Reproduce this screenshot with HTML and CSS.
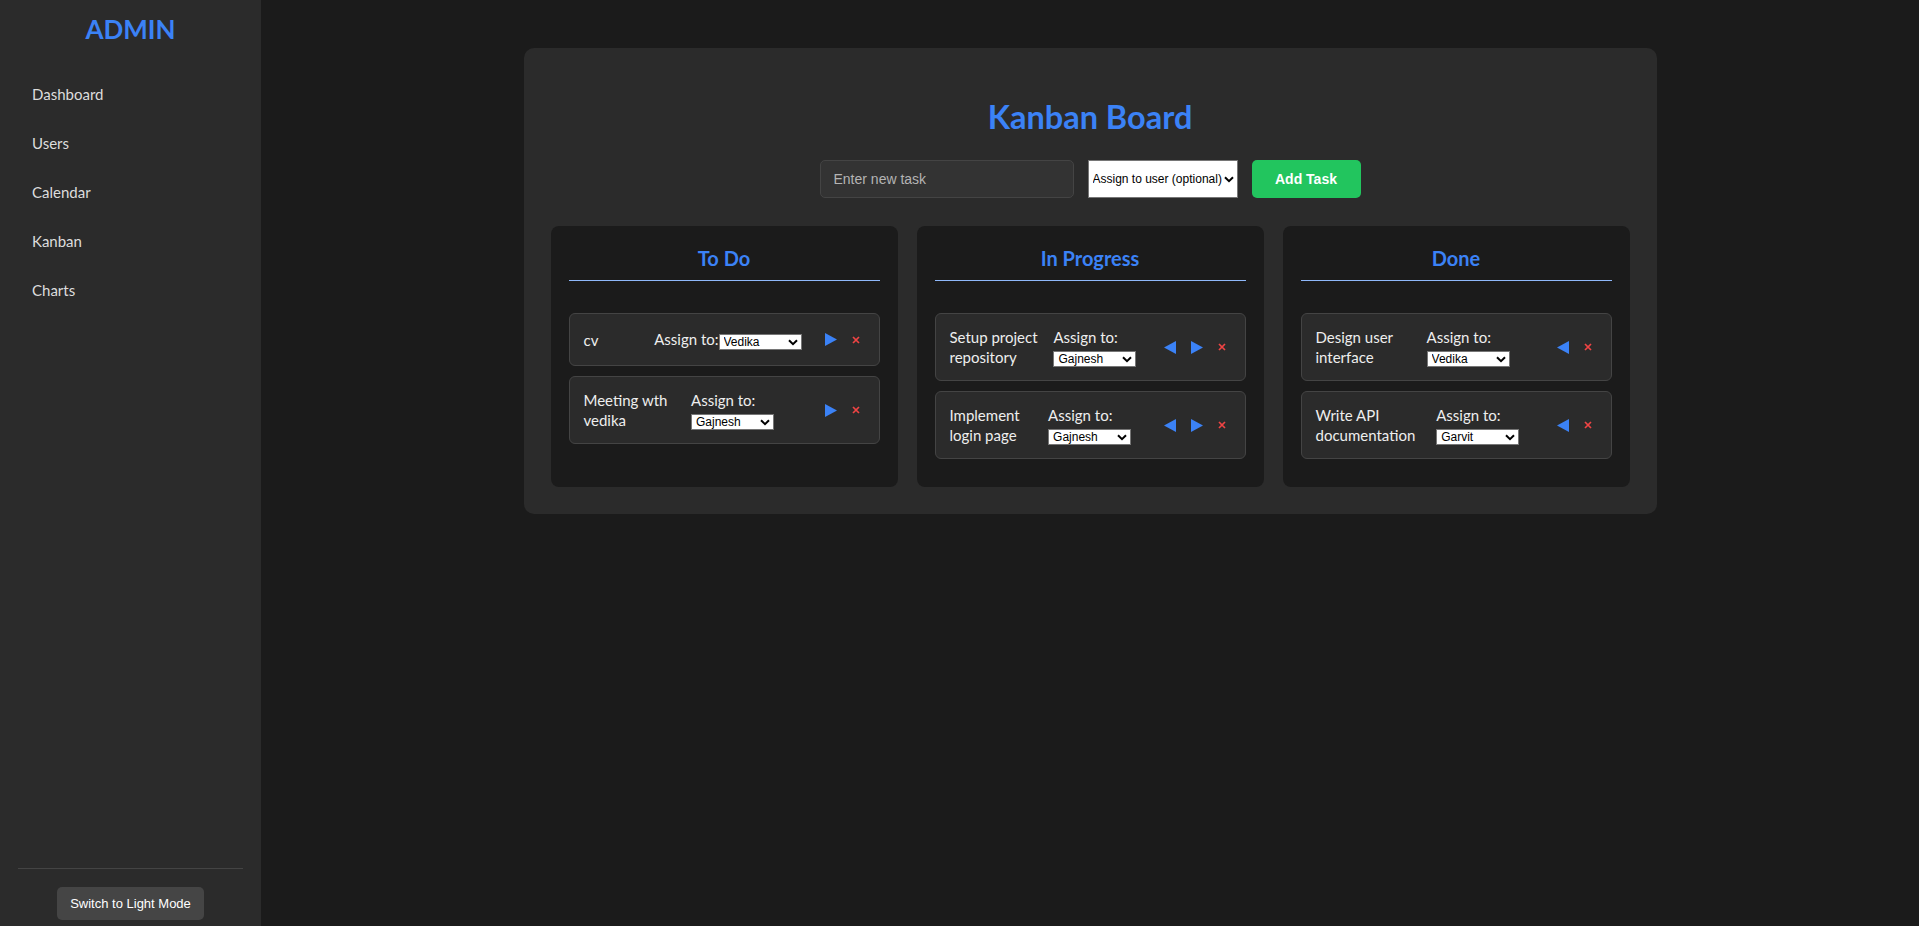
FILE: index.html
```html
<!DOCTYPE html>
<html lang="en">
<head>
<meta charset="utf-8">
<title>Admin - Kanban</title>
<link rel="stylesheet" href="styles.css">
</head>
<body>
<div class="app">
  <aside class="sidebar">
    <h1 class="brand">ADMIN</h1>
    <nav class="nav">
      <a class="nav-link" href="#">Dashboard</a>
      <a class="nav-link" href="#">Users</a>
      <a class="nav-link" href="#">Calendar</a>
      <a class="nav-link" href="#">Kanban</a>
      <a class="nav-link" href="#">Charts</a>
    </nav>
    <div class="sidebar-footer">
      <button class="theme-btn">Switch to Light Mode</button>
    </div>
  </aside>

  <main class="main">
    <section class="board">
      <h2 class="board-title">Kanban Board</h2>
      <div class="add-row">
        <input class="task-input" type="text" placeholder="Enter new task">
        <span class="select-wrap">
          <select class="user-select add-select">
            <option>Assign to user (optional)</option>
            <option>Vedika</option>
            <option>Gajnesh</option>
            <option>Garvit</option>
          </select>
          <svg class="chev chev-lg" width="10" height="7" viewBox="0 0 10 7"><path d="M1 1.2L5 5.2L9 1.2" fill="none" stroke="#000" stroke-width="2"/></svg>
        </span>
        <button class="add-btn">Add Task</button>
      </div>

      <div class="columns">
        <div class="column">
          <h3 class="column-title">To Do</h3>
          <div class="task">
            <span class="task-text">cv</span>
            <div class="assign"><label class="assign-label">Assign to:</label><span class="select-wrap"><select class="user-select small-select"><option>Vedika</option><option>Gajnesh</option><option>Garvit</option></select><svg class="chev" width="10" height="7" viewBox="0 0 10 7"><path d="M1 1.2L5 5.2L9 1.2" fill="none" stroke="#000" stroke-width="2"/></svg></span></div>
            <div class="actions">
              <button class="icon-btn"><svg width="12" height="13" viewBox="0 0 12 13"><path d="M0 0L12 6.5L0 13Z" fill="#3b82f6"/></svg></button>
              <button class="icon-btn del-btn"><svg width="8" height="8" viewBox="0 0 8 8"><path d="M1 1L7 7M7 1L1 7" stroke="#ef4444" stroke-width="1.7"/></svg></button>
            </div>
          </div>
          <div class="task">
            <span class="task-text">Meeting wth vedika</span>
            <div class="assign"><label class="assign-label">Assign to:</label><span class="select-wrap"><select class="user-select small-select"><option>Gajnesh</option><option>Vedika</option><option>Garvit</option></select><svg class="chev" width="10" height="7" viewBox="0 0 10 7"><path d="M1 1.2L5 5.2L9 1.2" fill="none" stroke="#000" stroke-width="2"/></svg></span></div>
            <div class="actions">
              <button class="icon-btn"><svg width="12" height="13" viewBox="0 0 12 13"><path d="M0 0L12 6.5L0 13Z" fill="#3b82f6"/></svg></button>
              <button class="icon-btn del-btn"><svg width="8" height="8" viewBox="0 0 8 8"><path d="M1 1L7 7M7 1L1 7" stroke="#ef4444" stroke-width="1.7"/></svg></button>
            </div>
          </div>
        </div>

        <div class="column">
          <h3 class="column-title">In Progress</h3>
          <div class="task">
            <span class="task-text">Setup project repository</span>
            <div class="assign"><label class="assign-label">Assign to:</label><span class="select-wrap"><select class="user-select small-select"><option>Gajnesh</option><option>Vedika</option><option>Garvit</option></select><svg class="chev" width="10" height="7" viewBox="0 0 10 7"><path d="M1 1.2L5 5.2L9 1.2" fill="none" stroke="#000" stroke-width="2"/></svg></span></div>
            <div class="actions">
              <button class="icon-btn"><svg width="12" height="13" viewBox="0 0 12 13"><path d="M12 0L0 6.5L12 13Z" fill="#3b82f6"/></svg></button>
              <button class="icon-btn"><svg width="12" height="13" viewBox="0 0 12 13"><path d="M0 0L12 6.5L0 13Z" fill="#3b82f6"/></svg></button>
              <button class="icon-btn del-btn"><svg width="8" height="8" viewBox="0 0 8 8"><path d="M1 1L7 7M7 1L1 7" stroke="#ef4444" stroke-width="1.7"/></svg></button>
            </div>
          </div>
          <div class="task">
            <span class="task-text">Implement login page</span>
            <div class="assign"><label class="assign-label">Assign to:</label><span class="select-wrap"><select class="user-select small-select"><option>Gajnesh</option><option>Vedika</option><option>Garvit</option></select><svg class="chev" width="10" height="7" viewBox="0 0 10 7"><path d="M1 1.2L5 5.2L9 1.2" fill="none" stroke="#000" stroke-width="2"/></svg></span></div>
            <div class="actions">
              <button class="icon-btn"><svg width="12" height="13" viewBox="0 0 12 13"><path d="M12 0L0 6.5L12 13Z" fill="#3b82f6"/></svg></button>
              <button class="icon-btn"><svg width="12" height="13" viewBox="0 0 12 13"><path d="M0 0L12 6.5L0 13Z" fill="#3b82f6"/></svg></button>
              <button class="icon-btn del-btn"><svg width="8" height="8" viewBox="0 0 8 8"><path d="M1 1L7 7M7 1L1 7" stroke="#ef4444" stroke-width="1.7"/></svg></button>
            </div>
          </div>
        </div>

        <div class="column">
          <h3 class="column-title">Done</h3>
          <div class="task">
            <span class="task-text">Design user interface</span>
            <div class="assign"><label class="assign-label">Assign to:</label><span class="select-wrap"><select class="user-select small-select"><option>Vedika</option><option>Gajnesh</option><option>Garvit</option></select><svg class="chev" width="10" height="7" viewBox="0 0 10 7"><path d="M1 1.2L5 5.2L9 1.2" fill="none" stroke="#000" stroke-width="2"/></svg></span></div>
            <div class="actions">
              <button class="icon-btn"><svg width="12" height="13" viewBox="0 0 12 13"><path d="M12 0L0 6.5L12 13Z" fill="#3b82f6"/></svg></button>
              <button class="icon-btn del-btn"><svg width="8" height="8" viewBox="0 0 8 8"><path d="M1 1L7 7M7 1L1 7" stroke="#ef4444" stroke-width="1.7"/></svg></button>
            </div>
          </div>
          <div class="task">
            <span class="task-text">Write API documentation</span>
            <div class="assign"><label class="assign-label">Assign to:</label><span class="select-wrap"><select class="user-select small-select"><option>Garvit</option><option>Vedika</option><option>Gajnesh</option></select><svg class="chev" width="10" height="7" viewBox="0 0 10 7"><path d="M1 1.2L5 5.2L9 1.2" fill="none" stroke="#000" stroke-width="2"/></svg></span></div>
            <div class="actions">
              <button class="icon-btn"><svg width="12" height="13" viewBox="0 0 12 13"><path d="M12 0L0 6.5L12 13Z" fill="#3b82f6"/></svg></button>
              <button class="icon-btn del-btn"><svg width="8" height="8" viewBox="0 0 8 8"><path d="M1 1L7 7M7 1L1 7" stroke="#ef4444" stroke-width="1.7"/></svg></button>
            </div>
          </div>
        </div>
      </div>
    </section>
  </main>
</div>
</body>
</html>
```

FILE: styles.css
```css
html, body {
  margin: 0;
  height: 100%;
}

body {
  background: #1b1b1b;
  color: #eeeeee;
  font-family: Lato, "Noto Sans", sans-serif;
}

.app {
  display: flex;
  height: 100vh;
}

/* Sidebar */
.sidebar {
  width: 261px;
  flex-shrink: 0;
  background: #2b2b2b;
  display: flex;
  flex-direction: column;
}

.brand {
  margin: 13px 0 0;
  font-size: 26px;
  line-height: 32px;
  font-weight: 700;
  color: #3b82f6;
  text-align: center;
}

.nav {
  margin-top: 24px;
  display: flex;
  flex-direction: column;
}

.nav-link {
  display: block;
  padding: 14.5px 32px;
  font-size: 15px;
  line-height: 20px;
  color: #dddddd;
  text-decoration: none;
}

.sidebar-footer {
  margin: auto 18px 0;
  border-top: 1px solid #444444;
  padding: 18px 0 6px;
  display: flex;
  justify-content: center;
}

.theme-btn {
  height: 33px;
  padding: 0 13px;
  background: #454545;
  color: #ffffff;
  border: none;
  border-radius: 5px;
  font: 13px "Liberation Sans", Arial, sans-serif;
}

/* Main */
.main {
  flex: 1;
  padding-top: 48px;
  overflow: auto;
}

.board {
  width: 1133px;
  margin: 0 auto;
  box-sizing: border-box;
  background: #2b2b2b;
  border-radius: 10px;
  padding: 27px;
}

.board-title {
  margin: 22px 0 23px;
  text-align: center;
  font-size: 32.5px;
  line-height: 40px;
  font-weight: 700;
  color: #3b82f6;
}

.add-row {
  display: flex;
  justify-content: center;
  align-items: center;
  gap: 14px;
}

.task-input {
  width: 254px;
  height: 38px;
  box-sizing: border-box;
  padding: 0 13px;
  background: #333333;
  border: 1px solid #444444;
  border-radius: 5px;
  color: #eeeeee;
  font: 14px "Liberation Sans", Arial, sans-serif;
  outline: none;
}

.task-input::placeholder {
  color: #b4b4b4;
}

.select-wrap {
  position: relative;
  display: inline-block;
  vertical-align: middle;
}

.user-select {
  -webkit-appearance: none;
  appearance: none;
  display: block;
  box-sizing: border-box;
  background: #ffffff;
  color: #000000;
  border: 1px solid #767676;
  border-radius: 0;
  font: 12px "Liberation Sans", Arial, sans-serif;
  outline: none;
  margin: 0;
}

.add-select {
  width: 150px;
  height: 38px;
  padding: 0 14px 0 4px;
}

.small-select {
  width: 83px;
  height: 16px;
  padding: 0 12px 0 4px;
  line-height: 14px;
}

.chev {
  position: absolute;
  right: 4px;
  top: 5px;
  pointer-events: none;
}

.chev-lg {
  right: 4px;
  top: 16px;
}

.add-btn {
  width: 109px;
  height: 38px;
  background: #22c55e;
  border: none;
  border-radius: 5px;
  color: #ffffff;
  font: bold 14px "Liberation Sans", Arial, sans-serif;
}

/* Columns */
.columns {
  margin-top: 28px;
  display: grid;
  grid-template-columns: repeat(3, 1fr);
  gap: 19px;
}

.column {
  background: #1b1b1b;
  border-radius: 8px;
  padding: 18px;
}

.column-title {
  margin: 2px 0 32px;
  padding-bottom: 10px;
  border-bottom: 1px solid #8fb8fa;
  text-align: center;
  font-size: 20px;
  line-height: 24px;
  font-weight: 700;
  color: #3b82f6;
}

.task {
  display: flex;
  align-items: center;
  gap: 10px;
  padding: 13px 14px;
  margin-bottom: 10px;
  background: #2b2b2b;
  border: 1px solid #444444;
  border-radius: 6px;
  font-size: 15px;
  line-height: 20px;
  color: #eeeeee;
}

.task-text {
  flex: 1 1 auto;
}

.assign {
  flex: 0 1 auto;
}

.assign-label {
  color: #eeeeee;
}

.actions {
  flex-shrink: 0;
  display: flex;
  align-items: center;
  gap: 5px;
  margin-left: 8px;
}

.icon-btn {
  display: flex;
  align-items: center;
  justify-content: center;
  width: 22px;
  height: 25px;
  padding: 0;
  background: none;
  border: none;
}

.del-btn {
  width: 18px;
}
```
